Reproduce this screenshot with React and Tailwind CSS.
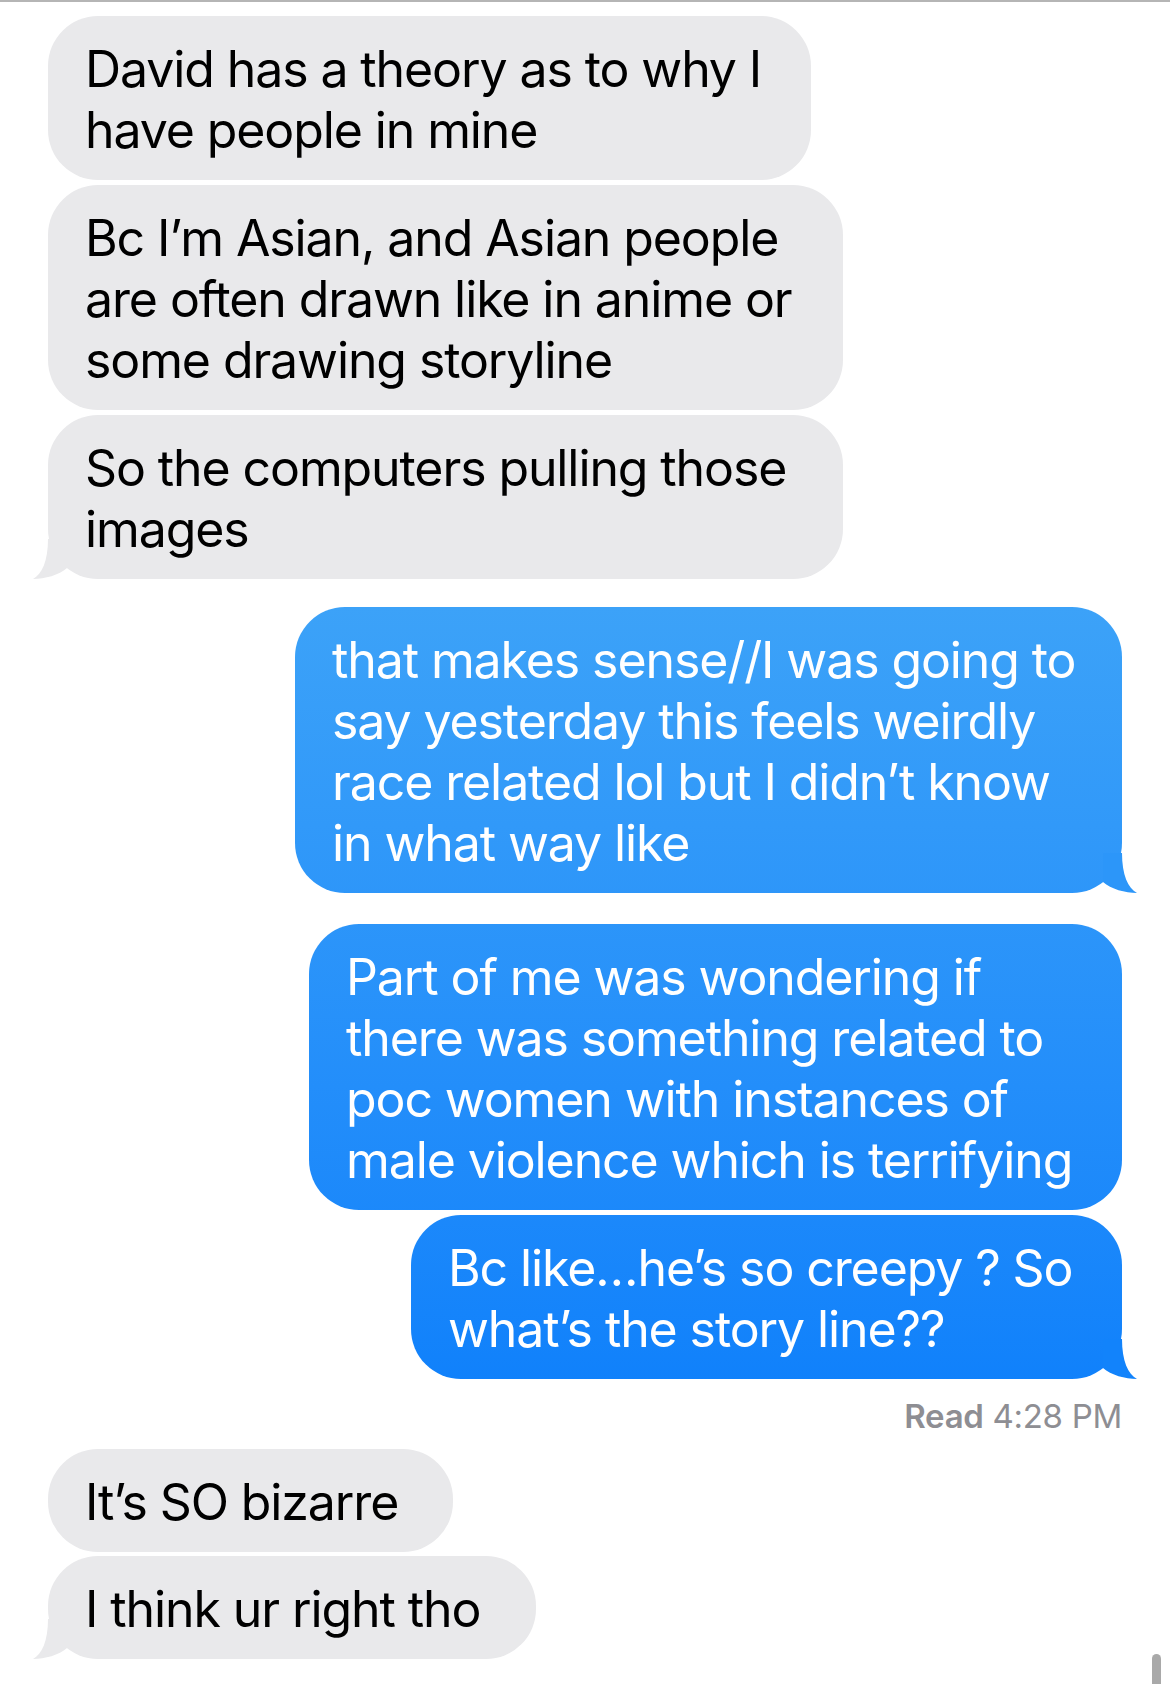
import React from "react";

const GRAY = "#e9e9eb";

function TailLeft() {
  return (
    <svg
      className="absolute bottom-0 left-[-15px]"
      width="40"
      height="40"
      viewBox="0 0 40 40"
    >
      <path d="M15 0 C15 22 9 35 0 40 C12 40 26 36 34 29 L34 0 Z" fill={GRAY} />
    </svg>
  );
}

function TailRight({ color }) {
  return (
    <svg
      className="absolute bottom-0 right-[-15px]"
      width="40"
      height="40"
      viewBox="0 0 40 40"
    >
      <path d="M25 0 C25 22 31 35 40 40 C28 40 14 36 6 29 L6 0 Z" fill={color} />
    </svg>
  );
}

function Bubble({ lines, width, mine, tail, tailColor, className = "" }) {
  const base = mine
    ? "self-end bg-gradient-to-b from-[#3ca2f8] from-[36%] to-[#1081fb] to-[82%] bg-fixed text-white"
    : "self-start bg-[#e9e9eb] text-black";
  return (
    <div
      className={`relative rounded-[50px] pt-[23px] pb-[19px] pl-[37px] pr-[40px] ${base} ${className}`}
      style={{ width }}
    >
      {tail && (mine ? <TailRight color={tailColor} /> : <TailLeft />)}
      <div className="relative whitespace-nowrap text-[50px] leading-[61px] tracking-[-1.1px]">
        {lines.map((l, i) => (
          <div key={i}>{l}</div>
        ))}
      </div>
    </div>
  );
}

export default function App() {
  return (
    <div className="relative h-[1684px] w-[1170px] overflow-hidden bg-white font-['Inter','Liberation_Sans',sans-serif]">
      <div className="h-[2px] bg-[#b5b5b5]" />

      <div className="flex flex-col px-[48px] pt-[14px]">
        <Bubble
          width={763}
          lines={["David has a theory as to why I", "have people in mine"]}
        />
        <Bubble
          className="mt-[5px]"
          width={795}
          lines={[
            "Bc I’m Asian, and Asian people",
            "are often drawn like in anime or",
            "some drawing storyline",
          ]}
        />
        <Bubble
          className="mt-[5px]"
          width={795}
          tail
          lines={["So the computers pulling those", "images"]}
        />

        <Bubble
          mine
          tail
          tailColor="#2c96f9"
          className="mt-[28px]"
          width={827}
          lines={[
            "that makes sense//I was going to",
            "say yesterday this feels weirdly",
            "race related lol but I didn’t know",
            "in what way like",
          ]}
        />
        <Bubble
          mine
          className="mt-[31px]"
          width={813}
          lines={[
            "Part of me was wondering if",
            "there was something related to",
            "poc women with instances of",
            "male violence which is terrifying",
          ]}
        />
        <Bubble
          mine
          tail
          tailColor="#1283fb"
          className="mt-[5px]"
          width={711}
          lines={["Bc like…he’s so creepy ? So", "what’s the story line??"]}
        />

        <div className="mt-[17px] self-end text-[33px] leading-[40px] tracking-[-0.3px] text-[#8e8e93]">
          <span className="font-semibold">Read</span> 4:28 PM
        </div>

        <Bubble className="mt-[13px]" width={405} lines={["It’s SO bizarre"]} />
        <Bubble
          className="mt-[4px]"
          width={488}
          tail
          lines={["I think ur right tho"]}
        />
      </div>

      <div className="absolute left-[1152px] top-[1654px] h-[60px] w-[9px] rounded-full bg-[#a9a9a9]" />
    </div>
  );
}
